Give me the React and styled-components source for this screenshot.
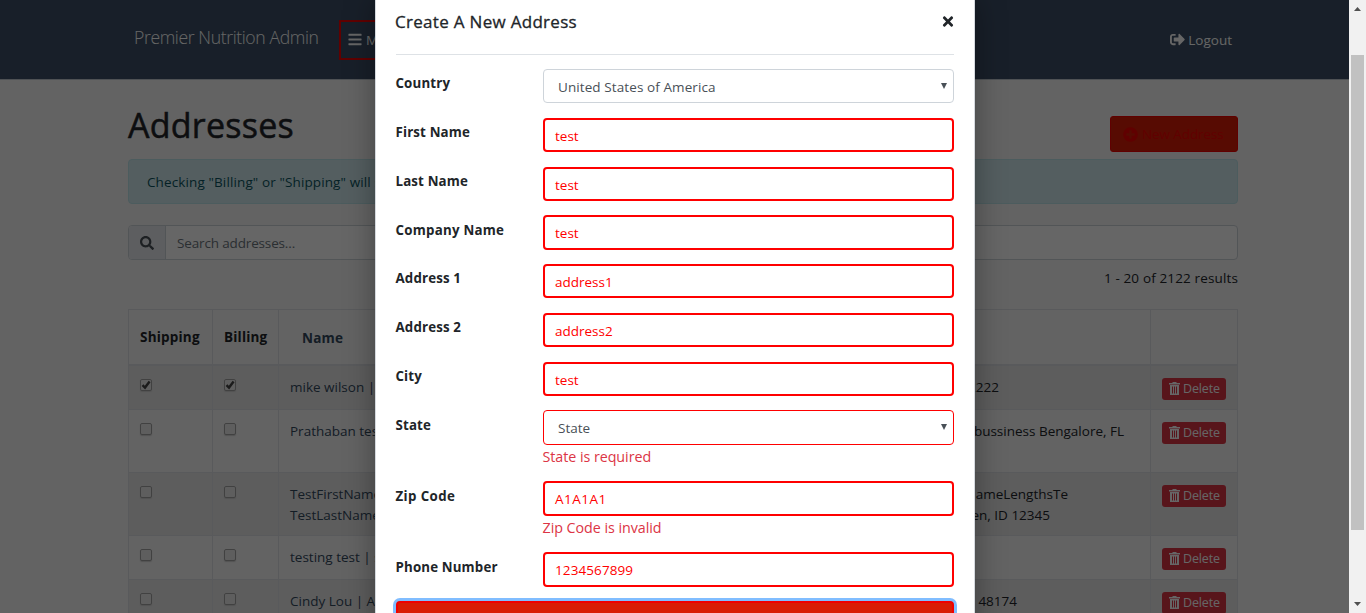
import React from "react";
import styled, { createGlobalStyle } from "styled-components";
import { FaBars, FaSignOutAlt, FaPlusCircle, FaSearch, FaTimes } from "react-icons/fa";

const GlobalStyle = createGlobalStyle`
  *, *::before, *::after { box-sizing: border-box; }
  html, body { margin: 0; height: 613px; overflow: hidden; }
  body { background: #f7f7f7; color: #212529; font: 13.5px/21px "Open Sans", "Noto Sans", sans-serif; }
`;

const Screen = styled.div`
  position: relative;
  display: flex;
  width: 1366px;
  height: 613px;
  overflow: hidden;
`;

const Page = styled.div`
  width: 1349px;
  height: 613px;
  overflow: hidden;
  background: #f7f7f7;
`;

const Container = styled.div`
  width: 1110px;
  margin-left: 128px;
`;

const Header = styled.header`
  display: flex;
  height: 80px;
  padding: 0 117px 0 134px;
  background: #3c4f66;
  border-bottom: 1px solid #c4cbd3;
  color: #fff;
`;

const Brand = styled.div`
  width: 205px;
  padding-top: 23px;
  font-size: 17.6px;
  line-height: 28px;
  font-weight: 300;
  letter-spacing: -0.38px;
  white-space: nowrap;
`;

const MenuButton = styled.div`
  display: flex;
  align-items: center;
  gap: 4px;
  width: 90px;
  height: 40px;
  margin-top: 20px;
  padding-left: 7px;
  border: 2px solid #f00000;
  font-size: 13.5px;
  svg { width: 14px; height: 15px; margin-top: -1px; }
`;

const Logout = styled.div`
  display: flex;
  align-items: center;
  gap: 3px;
  height: 40px;
  margin: 20px 0 0 auto;
  svg { width: 15px; height: 15px; margin-top: -1px; }
`;

const TitleRow = styled.div`
  display: flex;
  justify-content: space-between;
  height: 79px;
  padding-top: 36px;
`;

const Title = styled.h1`
  margin: -14px 0 0;
  font-size: 34px;
  line-height: 46px;
  font-weight: 500;
  letter-spacing: 0.25px;
  -webkit-text-stroke: 0.5px currentColor;
`;

const NewButton = styled.div`
  display: flex;
  align-items: center;
  gap: 4px;
  width: 128px;
  height: 36px;
  padding-left: 12px;
  border: 1px solid #f00000;
  border-radius: 3px;
  background: #d91d05;
  color: #f00000;
  letter-spacing: -0.1px;
  white-space: nowrap;
  svg { width: 15px; height: 15px; flex: none; }
`;

const Alert = styled.div`
  height: 45px;
  padding: 12px 18px;
  border: 1px solid #bee5eb;
  border-radius: 4px;
  background: #d1ecf1;
  color: #0c5460;
  letter-spacing: 0.12px;
  white-space: nowrap;
`;

const SearchBar = styled.div`
  display: flex;
  height: 35px;
  margin-top: 21px;
  border: 1px solid #ced4da;
  border-radius: 4px;
  background: #fff;
  color: #6c757d;
  line-height: 34px;
  letter-spacing: -0.15px;
`;

const SearchIcon = styled.div`
  display: flex;
  align-items: center;
  justify-content: center;
  width: 37px;
  margin-right: 11px;
  border-right: 1px solid #ced4da;
  border-radius: 3px 0 0 3px;
  background: #e9ecef;
  color: #495057;
  svg { width: 14px; height: 14px; }
`;

const Results = styled.div`
  height: 49px;
  padding-top: 8px;
  text-align: right;
  letter-spacing: 0.14px;
`;

const Table = styled.div`
  border: solid #dee2e6;
  border-width: 1px 0 0 1px;
`;

const TableRow = styled.div`
  display: grid;
  grid-template-columns: 84px 66px 372px 500px 87px;
  height: ${(p) => p.$h}px;
  background: ${(p) => (p.$odd ? "#e9e9e9" : "transparent")};
`;

const Cell = styled.div`
  padding: ${(p) => p.$pad || "11px"};
  border: solid #dee2e6;
  border-width: 0 ${(p) => (p.$open ? 0 : 1)}px ${(p) => (p.$head ? 2 : 1)}px 0;
  font-weight: ${(p) => (p.$head ? 700 : 400)};
  letter-spacing: ${(p) => (p.$head ? 0.2 : 0)}px;
  color: ${(p) => p.$color || "#212529"};
  white-space: nowrap;
  overflow: hidden;
`;

const AddressLine = styled.div`
  padding-right: ${(p) => p.$right}px;
  text-align: right;
`;

const CheckBox = styled.div`
  width: 12px;
  height: 12px;
  margin-top: 2px;
  border: 1px solid #a4a4a4;
  border-radius: 2px;
  background: #ececec;
  box-shadow: 0 1px 1px #ccc;
  svg { display: block; width: 10px; height: 10px; }
`;

const DeleteButton = styled.div`
  display: flex;
  align-items: center;
  gap: 3px;
  width: 64px;
  height: 22px;
  margin-top: 1px;
  padding: 0 0 1px 7px;
  border-radius: 3px;
  background: #dc3545;
  color: #fff;
  font-size: 12.5px;
  letter-spacing: -0.15px;
`;

const ScrollTrack = styled.div`
  display: flex;
  flex-direction: column;
  justify-content: space-between;
  align-items: center;
  width: 17px;
  height: 613px;
  background: #f1f1f1;
`;

const ScrollArrow = styled.svg`
  width: 17px;
  height: 17px;
  fill: #505050;
`;

const ScrollThumb = styled.div`
  width: 13px;
  height: 475px;
  margin: 38px 0 auto;
  background: #c1c1c1;
`;

const Overlay = styled.div`
  position: absolute;
  inset: 0 17px 0 0;
  background: rgba(0, 0, 0, 0.6);
`;

const Modal = styled.div`
  width: 600px;
  height: 640px;
  margin-left: 375px;
  padding: 0 20px;
  border: solid #d5d9de;
  border-width: 0 1px;
  background: #fff;
  box-shadow: 0 0 28px rgba(0, 0, 0, 0.35);
`;

const ModalHeader = styled.div`
  display: flex;
  justify-content: space-between;
  height: 55px;
  margin-bottom: 14px;
  padding: 9px 0 0;
  border-bottom: 1px solid #dee2e6;
  font-size: 17px;
  line-height: 25px;
  font-weight: 500;
  letter-spacing: 0.3px;
  -webkit-text-stroke: 0.3px currentColor;
  span { margin-left: -1px; }
  svg { width: 12px; height: 15px; margin-top: 5px; }
`;

const FormRow = styled.div`
  display: flex;
  height: ${(p) => (p.$error ? 71 : 48.75)}px;
`;

const Label = styled.label`
  width: 147px;
  margin-left: -0.5px;
  margin-right: 0.5px;
  padding-top: 4.4px;
  font-weight: 700;
  font-size: 13.3px;
  letter-spacing: ${(p) => p.$ls || 0.15}px;
`;

const Field = styled.div`
  flex: 1;
`;

const Control = styled.div`
  display: flex;
  align-items: center;
  justify-content: space-between;
  height: 34.25px;
  padding: ${(p) => (p.$select ? "3px 5px 0 14px" : "3px 10px 0 10px")};
  border: ${(p) => (p.$select ? 1 : 2)}px solid ${(p) => p.$border || "#f00"};
  border-radius: 4px;
  color: ${(p) => (p.$select ? "#495057" : "#f00")};
  letter-spacing: ${(p) => p.$ls || 0}px;
  svg { width: 8px; height: 8px; margin-top: -3px; fill: #495057; }
`;

const ErrorText = styled.div`
  margin-left: -0.5px;
  color: #dc3545;
  font-size: 14.3px;
  line-height: 23px;
  letter-spacing: -0.05px;
`;

const Submit = styled.div`
  height: 50px;
  border: 2px solid #f00000;
  border-radius: 4px;
  background: #d91d05;
  box-shadow: 0 0 0 3px #80bdff;
`;

const TrashIcon = () => (
  <svg width="11" height="13" viewBox="0 0 11 13" fill="#fff">
    <path d="M0 1h3.5V0h4v1H11v1.6H0z" />
    <path fillRule="evenodd" d="M1 3h9v10H1zM3 4.5v7h1v-7zM5 4.5v7h1v-7zM7 4.5v7h1v-7z" />
  </svg>
);

const Check = ({ on }) => (
  <CheckBox>
    {on && (
      <svg viewBox="0 0 10 10" fill="none" stroke="#444" strokeWidth="2.4">
        <path d="M1.5 5.2 4 7.6 8.6 1.6" />
      </svg>
    )}
  </CheckBox>
);

const rows = [
  { h: 44, on: true, name: ["mike wilson | mi"], addr: [["22222", 151]] },
  { h: 63, name: ["Prathaban test"], addr: [["bussiness Bengalore, FL", 26]] },
  { h: 63, name: ["TestFirstNameL", "TestLastNameL"], addr: [["NameLengthsTe", 82], ["een, ID 12345", 100]] },
  { h: 44.4, name: ["testing test | st"], addr: [] },
  { h: 63, name: ["Cindy Lou | AB"], addr: [["MI 48174", 133]] },
];

const fields = [
  { label: "Country", value: "United States of America", select: true, border: "#ced4da", vls: 0.09 },
  { label: "First Name", value: "test" },
  { label: "Last Name", value: "test" },
  { label: "Company Name", value: "test", ls: 0.25 },
  { label: "Address 1", value: "address1" },
  { label: "Address 2", value: "address2" },
  { label: "City", value: "test" },
  { label: "State", value: "State", select: true, error: "State is required" },
  { label: "Zip Code", value: "A1A1A1", error: "Zip Code is invalid", ls: 0.4, vls: 0.5 },
  { label: "Phone Number", value: "1234567899", vls: 0.1 },
];

export default function App() {
  return (
    <Screen>
      <GlobalStyle />
      <Page>
        <Header>
          <Brand>Premier Nutrition Admin</Brand>
          <MenuButton><FaBars />Menu</MenuButton>
          <Logout><FaSignOutAlt />Logout</Logout>
        </Header>
        <Container>
          <TitleRow>
            <Title>Addresses</Title>
            <NewButton><FaPlusCircle />New Address</NewButton>
          </TitleRow>
          <Alert>Checking "Billing" or "Shipping" will set</Alert>
          <SearchBar>
            <SearchIcon><FaSearch /></SearchIcon>
            Search addresses...
          </SearchBar>
          <Results>1 - 20 of 2122 results</Results>
          <Table>
            <TableRow $h={56}>
              <Cell $head $pad="17px 11px">Shipping</Cell>
              <Cell $head $pad="17px 11px">Billing</Cell>
              <Cell $head $open $pad="18px 23px" $color="#34495e">Name</Cell>
              <Cell $head />
              <Cell $head />
            </TableRow>
            {rows.map((r, i) => (
              <TableRow key={i} $h={r.h} $odd={i % 2 === 0}>
                <Cell><Check on={r.on} /></Cell>
                <Cell><Check on={r.on} /></Cell>
                <Cell $open $color="#34495e">{r.name.map((n) => <div key={n}>{n}</div>)}</Cell>
                <Cell $pad="11px 0">
                  {r.addr.map(([t, right]) => <AddressLine key={t} $right={right}>{t}</AddressLine>)}
                </Cell>
                <Cell><DeleteButton><TrashIcon />Delete</DeleteButton></Cell>
              </TableRow>
            ))}
          </Table>
        </Container>
      </Page>
      <ScrollTrack>
        <ScrollArrow viewBox="0 0 17 17"><path d="M5 11h7L8.5 7z" /></ScrollArrow>
        <ScrollThumb />
        <ScrollArrow viewBox="0 0 17 17"><path d="M5 6h7l-3.5 4z" /></ScrollArrow>
      </ScrollTrack>
      <Overlay>
        <Modal>
          <ModalHeader>
            <span>Create A New Address</span>
            <FaTimes />
          </ModalHeader>
          {fields.map((f) => (
            <FormRow key={f.label} $error={!!f.error}>
              <Label $ls={f.ls}>{f.label}</Label>
              <Field>
                <Control $select={f.select} $border={f.border} $ls={f.vls}>
                  <span>{f.value}</span>
                  {f.select && <svg viewBox="0 0 8 8"><path d="M1 1h6L4 7z" /></svg>}
                </Control>
                {f.error && <ErrorText>{f.error}</ErrorText>}
              </Field>
            </FormRow>
          ))}
          <Submit />
        </Modal>
      </Overlay>
    </Screen>
  );
}
